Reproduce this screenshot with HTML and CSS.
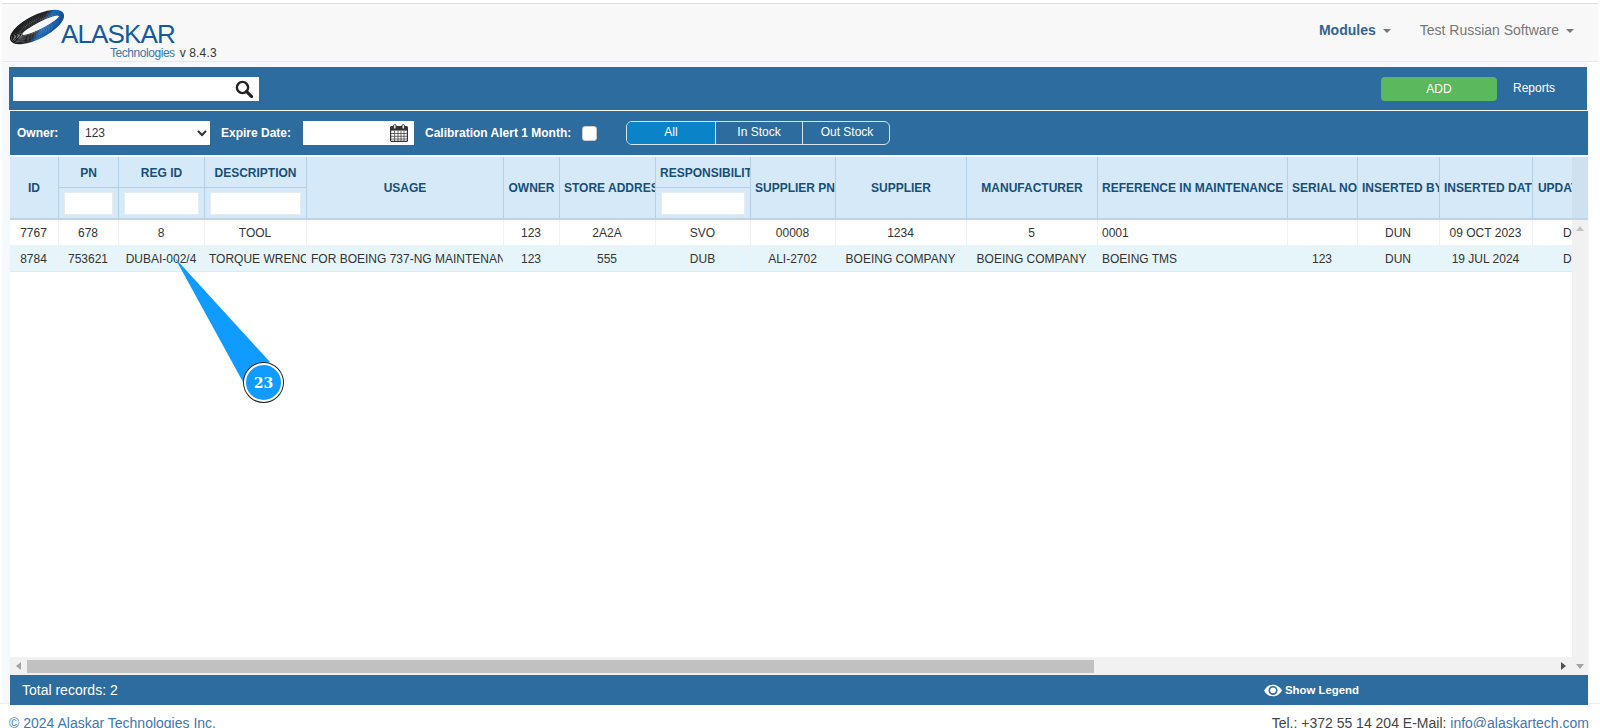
FILE: index.html
```html
<!DOCTYPE html>
<html lang="en">
<head>
<meta charset="utf-8">
<title>Alaskar Technologies</title>
<link rel="stylesheet" href="styles.css">
</head>
<body>
<header class="navbar">
  <div class="brand">
    <svg class="swoosh" viewBox="0 0 60 36" width="60" height="36" aria-hidden="true">
      <defs>
        <linearGradient id="ring" gradientUnits="userSpaceOnUse" x1="18" y1="4" x2="36" y2="34">
          <stop offset="0" stop-color="#111"/>
          <stop offset="0.55" stop-color="#26282c"/>
          <stop offset="0.68" stop-color="#1d66b3"/>
          <stop offset="1" stop-color="#0f4f9a"/>
        </linearGradient>
      </defs>
      <g fill="none" stroke="url(#ring)" transform="rotate(-27 30 18)">
        <ellipse cx="30" cy="18" rx="29" ry="11" stroke-width="1.5"/>
        <ellipse cx="30.500" cy="18" rx="28" ry="10" stroke-width="1.3"/>
        <ellipse cx="31" cy="18" rx="27" ry="9.100" stroke-width="1.200"/>
        <ellipse cx="31.500" cy="18" rx="26" ry="8.200" stroke-width="1.200"/>
        <ellipse cx="32" cy="18" rx="25" ry="7.300" stroke-width="1.100"/>
        <ellipse cx="32.500" cy="18" rx="24" ry="6.400" stroke-width="1.100"/>
        <ellipse cx="33" cy="18" rx="23" ry="5.500" stroke-width="1"/>
        <ellipse cx="33.500" cy="18" rx="22" ry="4.700" stroke-width="1"/>
        <ellipse cx="34" cy="18" rx="21" ry="3.900" stroke-width="1"/>
      </g>
    </svg>
    <div class="brand-name">ALASKAR</div>
    <div class="brand-sub"><span class="tech">Technologies</span><span class="version">v 8.4.3</span></div>
  </div>
  <nav class="nav-links">
    <a class="nav-modules">Modules<i class="caret"></i></a>
    <a class="nav-user">Test Russian Software<i class="caret"></i></a>
  </nav>
</header>

<div class="page">
<main class="panel">
  <section class="toolbar">
    <div class="search">
      <input class="search-input" type="text" aria-label="Search">
      <svg class="search-icon" viewBox="0 0 18 18" width="18" height="18" aria-hidden="true"><circle cx="7.5" cy="7.5" r="5.6" fill="none" stroke="#222" stroke-width="2.4"/><path d="M11.6 11.6 16.6 16.6" stroke="#222" stroke-width="3" stroke-linecap="round"/></svg>
    </div>
    <button class="btn-add">ADD</button>
    <a class="reports">Reports</a>
  </section>

  <section class="filters">
    <label class="lbl lbl-owner">Owner:</label>
    <select class="owner-select"><option>123</option></select>
    <label class="lbl lbl-date">Expire Date:</label>
    <div class="date-box">
      <svg viewBox="0 0 18 18" width="18" height="18" aria-hidden="true">
        <rect x="0.6" y="2.6" width="16.8" height="14.8" rx="1" fill="#fff" stroke="#333" stroke-width="1.2"/>
        <rect x="1" y="3" width="16" height="3.6" fill="#333"/>
        <path d="M1 9.5H17M1 12.3H17M1 15H17M4.6 7V17M8 7V17M11 7V17M14 7V17" stroke="#444" stroke-width="0.8"/>
        <rect x="3.6" y="0.6" width="2.4" height="4.4" rx="1" fill="#fff" stroke="#333"/>
        <rect x="12" y="0.6" width="2.4" height="4.4" rx="1" fill="#fff" stroke="#333"/>
      </svg>
    </div>
    <label class="lbl lbl-cal">Calibration Alert 1 Month:</label>
    <input class="check" type="checkbox" aria-label="Calibration Alert 1 Month">
    <div class="segments">
      <span class="seg seg-active">All</span>
      <span class="seg">In Stock</span>
      <span class="seg">Out Stock</span>
    </div>
  </section>

  <section class="grid">
    <div class="viewport">
      <table class="data">
        <colgroup>
          <col class="c-id"><col class="c-pn"><col class="c-reg"><col class="c-desc"><col class="c-usage"><col class="c-owner"><col class="c-store"><col class="c-resp"><col class="c-spn"><col class="c-sup"><col class="c-man"><col class="c-ref"><col class="c-ser"><col class="c-iby"><col class="c-idt"><col class="c-upd">
        </colgroup>
        <thead>
          <tr class="head-top">
            <th rowspan="2">ID</th>
            <th>PN</th>
            <th>REG ID</th>
            <th>DESCRIPTION</th>
            <th rowspan="2">USAGE</th>
            <th rowspan="2">OWNER</th>
            <th rowspan="2">STORE ADDRESS</th>
            <th>RESPONSIBILITY</th>
            <th rowspan="2">SUPPLIER PN</th>
            <th rowspan="2">SUPPLIER</th>
            <th rowspan="2">MANUFACTURER</th>
            <th rowspan="2">REFERENCE IN MAINTENANCE</th>
            <th rowspan="2">SERIAL NO</th>
            <th rowspan="2">INSERTED BY</th>
            <th rowspan="2">INSERTED DATE</th>
            <th rowspan="2">UPDATED BY</th>
          </tr>
          <tr class="head-filter">
            <th><input type="text" aria-label="PN"></th>
            <th><input type="text" aria-label="REG ID"></th>
            <th><input type="text" aria-label="DESCRIPTION"></th>
            <th><input type="text" aria-label="RESPONSIBILITY"></th>
          </tr>
        </thead>
        <tbody>
          <tr>
            <td>7767</td><td>678</td><td>8</td><td>TOOL</td><td class="left"></td><td>123</td><td>2A2A</td><td>SVO</td><td>00008</td><td>1234</td><td>5</td><td class="left">0001</td><td></td><td>DUN</td><td>09 OCT 2023</td><td>DUN</td>
          </tr>
          <tr class="alt">
            <td>8784</td><td>753621</td><td>DUBAI-002/4</td><td>TORQUE WRENCH</td><td class="left">FOR BOEING 737-NG MAINTENANCE</td><td>123</td><td>555</td><td>DUB</td><td>ALI-2702</td><td>BOEING COMPANY</td><td>BOEING COMPANY</td><td class="left">BOEING TMS</td><td>123</td><td>DUN</td><td>19 JUL 2024</td><td>DUN</td>
          </tr>
        </tbody>
      </table>
    </div>
    <div class="vscroll">
      <div class="vscroll-head"></div>
      <div class="vscroll-track"><i class="arrow-up"></i></div>
    </div>
    <div class="hscroll">
      <i class="arrow-left"></i>
      <div class="thumb-lane"><div class="thumb"></div></div>
      <i class="arrow-right"></i>
    </div>
    <div class="corner"><i class="arrow-down"></i></div>
  </section>

  <section class="statusbar">
    <span class="total">Total records: 2</span>
    <a class="legend">
      <svg viewBox="0 0 20 14" width="18" height="13" aria-hidden="true"><path fill="#fff" fill-rule="evenodd" d="M10 .5C5.6.5 2 3.2 0 7c2 3.800 5.600 6.500 10 6.500s8-2.700 10-6.500C18 3.200 14.400.5 10 .5zM10 12c-2.800 0-5-2.200-5-5s2.200-5 5-5 5 2.200 5 5-2.200 5-5 5z"/><circle cx="10" cy="6.800" r="3.200" fill="#fff"/></svg>
      Show Legend
    </a>
  </section>
</main>
</div>

<footer class="footer">
  <a class="link">© 2024 Alaskar Technologies Inc.</a>
  <span class="contact">Tel.: +372 55 14 204 E-Mail: <a class="link">info@alaskartech.com</a></span>
</footer>

<div class="callout">
  <svg class="callout-tail" viewBox="0 0 120 150" width="120" height="150" aria-hidden="true"><polygon points="0,1 95,105 68,125" fill="#0f9bff"/></svg>
  <span class="callout-badge">23</span>
</div>
</body>
</html>
```
FILE: styles.css
```css
* { box-sizing: border-box; }
html, body { height: 100%; }
body {
  margin: 0;
  background: #fff;
  font-family: "Liberation Sans", Arial, sans-serif;
  font-size: 12px;
  color: #333;
  overflow: hidden;
  position: relative;
  padding-top: 3px;
}

/* Navbar */
.navbar {
  height: 59px;
  background: #f8f8f8;
  border-top: 1px solid #d4dde8;
  border-bottom: 1px solid #e7e7e7;
  margin-left: 2px;
  margin-right: 2px;
  display: flex;
  justify-content: space-between;
  position: relative;
}
.brand {
  position: relative;
  width: 260px;
  padding: 34px 0 0 58px;
}
.swoosh { position: absolute; left: 5px; top: 5px; }
.brand-name {
  position: absolute;
  left: 59px;
  top: 17px;
  font-size: 26px;
  line-height: 26px;
  letter-spacing: -0.85px;
  color: #165a9c;
}
.brand-sub {
  margin-left: 50px;
  margin-top: 8px;
  display: flex;
  align-items: baseline;
  gap: 5px;
  line-height: 14px;
}
.tech { font-size: 12px; color: #3f75a8; letter-spacing: -0.45px; }
.version { font-size: 12px; color: #333; letter-spacing: 0.15px; }
.nav-links {
  display: flex;
  gap: 29px;
  padding: 18px 24px 0 0;
  font-size: 14px;
  line-height: 16px;
}
.nav-modules { font-weight: bold; color: #2f6496; }
.nav-user { color: #777; }
.caret {
  display: inline-block;
  margin-left: 7px;
  vertical-align: middle;
  border-top: 4px solid #777;
  border-left: 4px solid transparent;
  border-right: 4px solid transparent;
}

/* Page strip behind the panel */
.page {
  margin-left: 2px;
  width: 1587px;
  background: #f5f8fd;
  padding: 5px 0 0 7px;
}

/* Panel */
.panel { width: 1579px; }
.toolbar {
  height: 43px;
  width: 1578px;
  background: #2d6c9f;
  display: flex;
  align-items: flex-start;
  padding: 10px 32px 0 4px;
}
.search { position: relative; width: 246px; height: 24px; }
.search-input { width: 100%; height: 100%; border: 0; padding: 0; background: #fff; display: block; }
.search-icon { position: absolute; right: 6px; top: 3px; }
.btn-add {
  margin-left: auto;
  width: 116px;
  height: 24px;
  border: 0;
  border-radius: 4px;
  background: #5cb85c;
  color: #fff;
  font: 12px "Liberation Sans", Arial, sans-serif;
}
.reports { margin-left: 16px; color: #fff; line-height: 23px; width: 42px; }

.filters {
  margin: 1px 0 0 1px;
  height: 44px;
  width: 1578px;
  background: #2d6c9f;
  display: flex;
  align-items: center;
  padding-left: 7px;
}
.lbl { color: #fff; font-weight: bold; font-size: 12px; white-space: nowrap; }
.lbl-owner { width: 62px; }
.owner-select {
  width: 131px;
  height: 24px;
  border: 0;
  border-radius: 0;
  background: #fff;
  color: #333;
  font: 12px "Liberation Sans", Arial, sans-serif;
  padding-left: 2px;
}
.lbl-date { margin-left: 11px; width: 82px; }
.date-box {
  width: 111px;
  height: 24px;
  background: #fff;
  display: flex;
  justify-content: flex-end;
  align-items: center;
  padding-right: 6px;
}
.lbl-cal { margin-left: 11px; width: 156px; }
.check {
  appearance: none;
  margin: 0 0 0 1px;
  width: 15px;
  height: 15px;
  background: #fff;
  border: 1px solid #ccc;
  border-radius: 3px;
}
.segments {
  margin-left: 29px;
  width: 264px;
  height: 24px;
  display: grid;
  grid-template-columns: 88px 87px 89px;
  border: 1px solid #d5e3ee;
  border-radius: 6px;
  overflow: hidden;
}
.seg {
  color: #fff;
  text-align: center;
  line-height: 21px;
  font-size: 12px;
  border-left: 1px solid #d5e3ee;
}
.seg-active { background: #0a83c8; border-left: 0; }

/* Grid */
.grid {
  margin: 2px 0 0 1px;
  width: 1578px;
  height: 518px;
  display: grid;
  grid-template-columns: 1562px 16px;
  grid-template-rows: 500px 18px;
  background: #fff;
}
.viewport { overflow: hidden; background: #fff; }
.data {
  table-layout: fixed;
  border-collapse: separate;
  border-spacing: 0;
  width: 1611px;
}
.c-id { width: 49px; }
.c-pn { width: 60px; }
.c-reg { width: 86px; }
.c-desc { width: 102px; }
.c-usage { width: 197px; }
.c-owner { width: 56px; }
.c-store { width: 96px; }
.c-resp { width: 95px; }
.c-spn { width: 85px; }
.c-sup { width: 131px; }
.c-man { width: 131px; }
.c-ref { width: 190px; }
.c-ser { width: 70px; }
.c-iby { width: 82px; }
.c-idt { width: 93px; }
.c-upd { width: 88px; }

.data th {
  background: #d5e9f8;
  color: #174f78;
  font-size: 12px;
  font-weight: bold;
  text-align: center;
  white-space: nowrap;
  overflow: hidden;
  padding: 0 4px;
  border-right: 1px solid #b4d0e5;
}
.head-top th { height: 31px; padding-top: 2px; border-bottom: 1px solid #b4d0e5; }
.head-top th[rowspan] { padding-top: 0; border-bottom: 2px solid #bdd6e9; }
.head-filter th { height: 32px; border-bottom: 2px solid #bdd6e9; padding: 0 5px; }
.head-filter input {
  display: block;
  width: 100%;
  height: 23px;
  border: 1px solid #e4edf3;
  background: #fff;
}
.data td {
  height: 26px;
  padding: 0 5px 0 4px;
  text-align: center;
  font-size: 12px;
  color: #333;
  white-space: nowrap;
  overflow: hidden;
  border-right: 1px solid #eef2f4;
  border-bottom: 1px solid #eef2f4;
}
.data td.left { text-align: left; padding-right: 0; }
.alt td { background: #e6f5f9; border-bottom-color: #dfeaee; }

/* Scrollbars */
.vscroll { display: flex; flex-direction: column; }
.vscroll-head { height: 63px; background: #cfe1ef; border-bottom: 2px solid #bdd6e9; }
.vscroll-track {
  flex: 1;
  background: #f1f1f1;
  display: flex;
  flex-direction: column;
  align-items: center;
  padding: 6px 0 0;
}
.arrow-up {
  border-bottom: 5px solid #c4c4c4;
  border-left: 4px solid transparent;
  border-right: 4px solid transparent;
}
.hscroll {
  background: #f1f1f1;
  display: flex;
  align-items: center;
  padding: 0 6px;
}
.arrow-left {
  border-right: 5px solid #a3a3a3;
  border-top: 4px solid transparent;
  border-bottom: 4px solid transparent;
}
.arrow-right {
  border-left: 5px solid #505050;
  border-top: 4px solid transparent;
  border-bottom: 4px solid transparent;
}
.thumb-lane { flex: 1; padding: 0 6px; }
.thumb { width: 1067px; height: 13px; background: #c1c1c1; }
.corner { background: #f1f1f1; display: flex; align-items: center; justify-content: center; }
.arrow-down {
  border-top: 5px solid #a3a3a3;
  border-left: 4px solid transparent;
  border-right: 4px solid transparent;
}

/* Status */
.statusbar {
  margin-left: 1px;
  width: 1578px;
  height: 30px;
  background: #2d6c9f;
  color: #fff;
  display: flex;
  align-items: center;
  justify-content: space-between;
  padding: 0 229px 0 12px;
  position: relative;
  z-index: 1;
}
.total { font-size: 14px; }
.legend { display: flex; align-items: center; gap: 3px; font-size: 11.4px; font-weight: bold; }

/* Footer */
.footer {
  margin-top: -2px;
  height: 60px;
  background: #fff;
  border-top: 1px solid #eee;
  display: flex;
  justify-content: space-between;
  padding: 9px 11px 0 9px;
  font-size: 14px;
  line-height: 20px;
  color: #444;
}
.link { color: #3f78ad; }

/* Callout on top of the table */
.callout { position: absolute; left: 175px; top: 257px; width: 120px; height: 150px; }
.callout-tail { position: absolute; left: 0; top: 0; }
.callout-badge {
  position: absolute;
  left: 69px;
  top: 106px;
  width: 39px;
  height: 39px;
  border-radius: 50%;
  background: #0f9bff;
  border: 2px solid #fff;
  box-shadow: 0 0 0 1px #222;
  color: #fff;
  font: bold 14px/37px "DejaVu Serif", "Liberation Serif", serif;
  text-align: center;
}
```
